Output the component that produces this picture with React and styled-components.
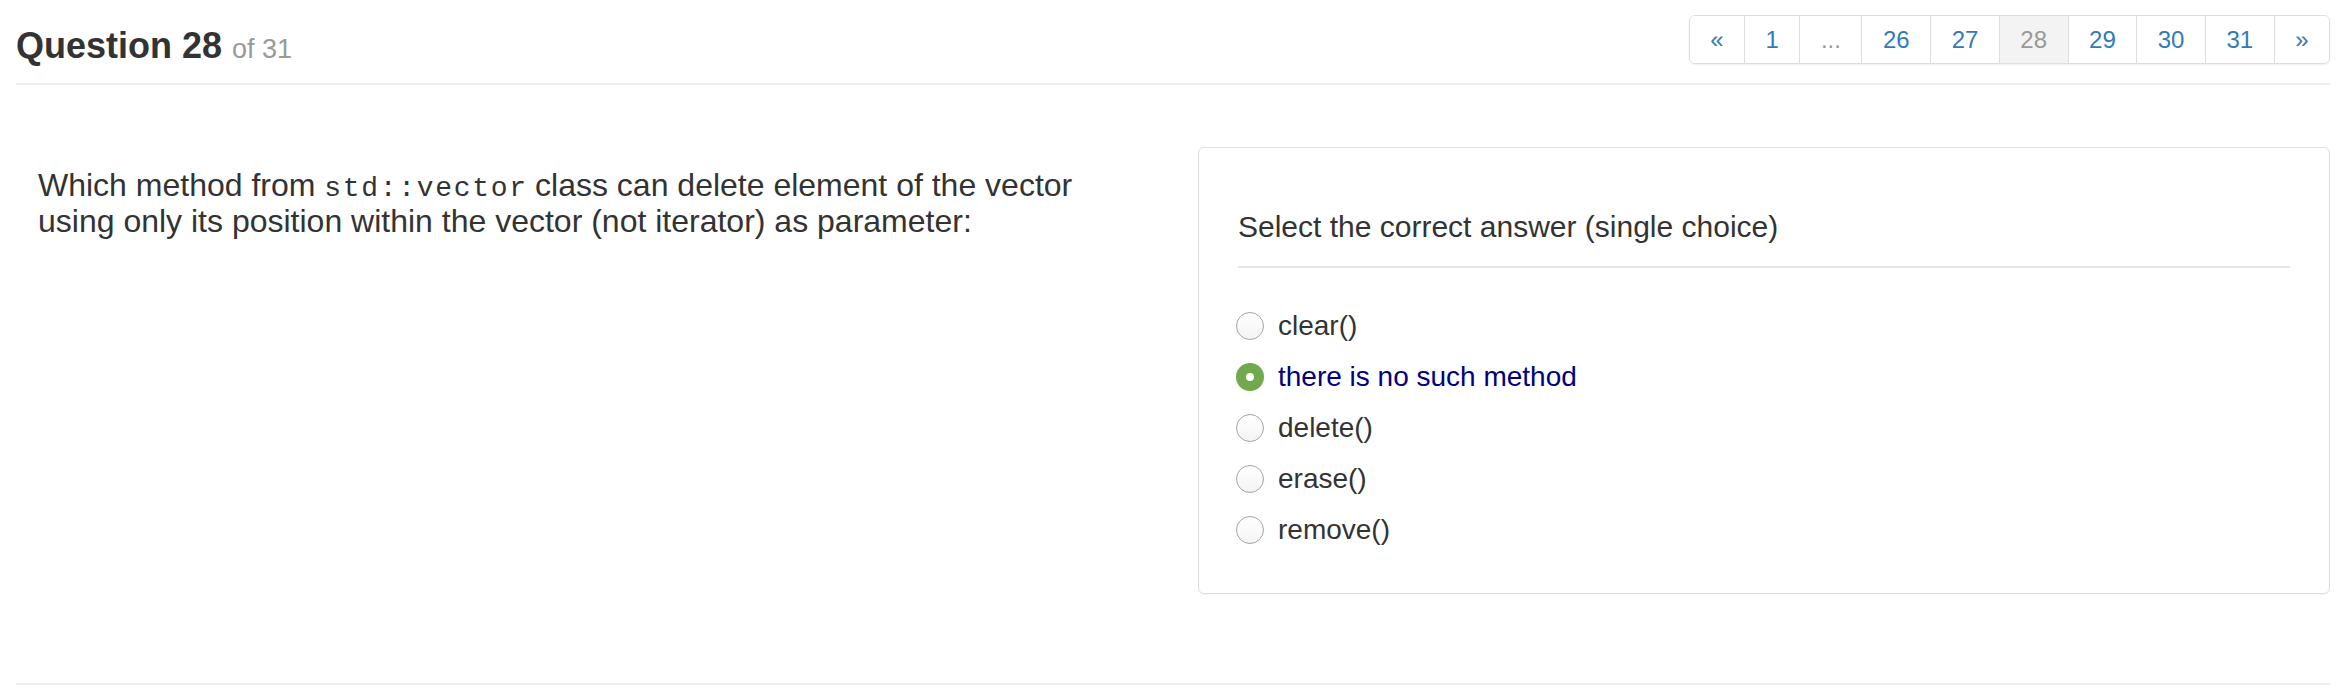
import styled, { createGlobalStyle } from "styled-components";

const GlobalStyle = createGlobalStyle`
  body {
    margin: 0;
    background: #fff;
    font-family: "Liberation Sans", Arial, Helvetica, sans-serif;
    color: #333;
  }
`;

const pages = ["«", "1", "...", "26", "27", "28", "29", "30", "31", "»"];
const answers = ["clear()", "there is no such method", "delete()", "erase()", "remove()"];

const App = () => {
  const current = "28";
  const selected = 1;

  return (
    <Page>
      <GlobalStyle />
      <Header>
        <Title>
          Question 28 <small>of 31</small>
        </Title>
        <Pagination>
          {pages.map((p) => (
            <PageItem key={p} $active={p === current} $muted={p === "..."}>
              {p}
            </PageItem>
          ))}
        </Pagination>
      </Header>
      <Divider />
      <Body>
        <QuestionText>
          Which method from <Code>std::vector</Code> class can delete element of the vector
          using only its position within the vector (not iterator) as parameter:
        </QuestionText>
        <AnswerPanel>
          <PanelHeading>Select the correct answer (single choice)</PanelHeading>
          <PanelRule />
          <Options>
            {answers.map((a, i) => (
              <Option key={a} $checked={i === selected}>
                <Radio $checked={i === selected} />
                {a}
              </Option>
            ))}
          </Options>
        </AnswerPanel>
      </Body>
      <FooterRule />
    </Page>
  );
};

export default App;

const Page = styled.div`
  padding: 0 16px;
  height: 690px;
  box-sizing: border-box;
  display: flex;
  flex-direction: column;
`;

const Header = styled.div`
  display: flex;
  justify-content: space-between;
  align-items: flex-start;
  padding-top: 15px;
`;

const Title = styled.h3`
  margin: 13px 0 0;
  font-size: 36px;
  line-height: 36px;
  font-weight: bold;
  color: #333;

  small {
    font-size: 27px;
    font-weight: normal;
    color: #999;
  }
`;

const Pagination = styled.div`
  display: flex;
  border: 1px solid #ddd;
  border-radius: 6px;
  overflow: hidden;
  box-shadow: 0 1px 2px rgba(0, 0, 0, 0.08);
`;

const PageItem = styled.span`
  padding: 9px 20.5px;
  font-size: 24px;
  line-height: 29px;
  color: ${(p) => (p.$active || p.$muted ? "#999" : "#337ab7")};
  background: ${(p) => (p.$active ? "#f3f3f3" : "#fff")};
  & + & {
    border-left: 1px solid #ddd;
  }
`;

const Divider = styled.div`
  margin-top: 16px;
  border-top: 2px solid #eee;
`;

const Body = styled.div`
  display: grid;
  grid-template-columns: 1fr 1132px;
  column-gap: 25px;
  margin-top: 62px;
`;

const QuestionText = styled.p`
  margin: 0;
  padding: 20px 22px 0;
  font-size: 32px;
  line-height: 36px;
  color: #333;
`;

const Code = styled.code`
  font-family: "Liberation Mono", "Courier New", monospace;
  font-size: 28px;
  line-height: 1;
  letter-spacing: 1.7px;
  margin-right: -1.7px;
`;

const AnswerPanel = styled.div`
  border: 1px solid #ddd;
  border-radius: 6px;
  padding: 40px 39px 38px 39px;
  box-shadow: 0 1px 1px rgba(0, 0, 0, 0.04);
`;

const PanelHeading = styled.div`
  margin-top: 21px;
  font-size: 30px;
  line-height: 35px;
  color: #333;
`;

const PanelRule = styled.div`
  margin-top: 22px;
  border-top: 2px solid #e5e5e5;
`;

const Options = styled.div`
  display: flex;
  flex-direction: column;
  margin-top: 32px;
`;

const Option = styled.label`
  display: flex;
  align-items: center;
  gap: 14px;
  height: 51px;
  font-size: 28px;
  color: ${(p) => (p.$checked ? "#000080" : "#333")};
`;

const Radio = styled.span`
  width: 28px;
  height: 28px;
  margin-left: -2px;
  border-radius: 50%;
  box-sizing: border-box;
  display: flex;
  align-items: center;
  justify-content: center;
  border: ${(p) => (p.$checked ? "none" : "1.5px solid #a4a4a4")};
  background: ${(p) => (p.$checked ? "#71a94f" : "linear-gradient(#fff, #f4f4f4)")};

  &::after {
    content: "";
    display: ${(p) => (p.$checked ? "block" : "none")};
    width: 8px;
    height: 8px;
    border-radius: 50%;
    background: #fff;
  }
`;

const FooterRule = styled.div`
  margin-top: auto;
  margin-bottom: 5px;
  border-top: 2px solid #eee;
`;
